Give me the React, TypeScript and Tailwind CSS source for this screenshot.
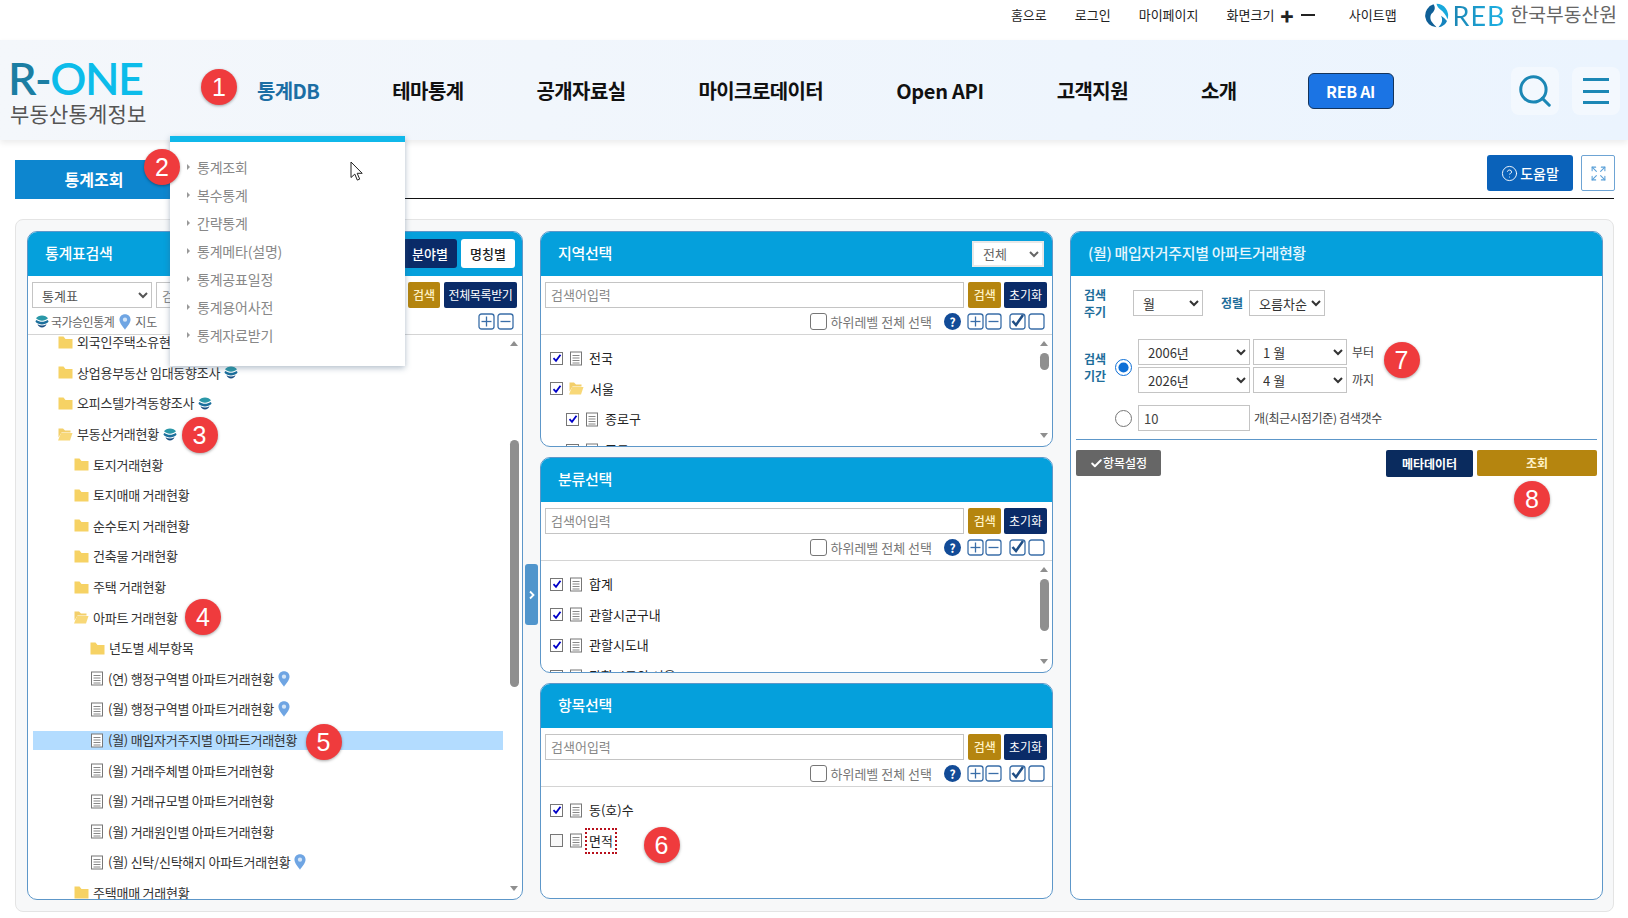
import React from 'react';
import { Search, CircleHelp, Expand, Check } from 'lucide-react';

type TreeRow = { level: number; icon: 'folder' | 'open' | 'doc'; text: string; badge?: 'stack' | 'pin'; active?: boolean };

const treeRows: TreeRow[] = [
  { level: 1, icon: 'folder', text: '외국인주택소유현황', badge: 'stack' },
  { level: 1, icon: 'folder', text: '상업용부동산 임대동향조사', badge: 'stack' },
  { level: 1, icon: 'folder', text: '오피스텔가격동향조사', badge: 'stack' },
  { level: 1, icon: 'open', text: '부동산거래현황', badge: 'stack' },
  { level: 2, icon: 'folder', text: '토지거래현황' },
  { level: 2, icon: 'folder', text: '토지매매 거래현황' },
  { level: 2, icon: 'folder', text: '순수토지 거래현황' },
  { level: 2, icon: 'folder', text: '건축물 거래현황' },
  { level: 2, icon: 'folder', text: '주택 거래현황' },
  { level: 2, icon: 'open', text: '아파트 거래현황' },
  { level: 3, icon: 'folder', text: '년도별 세부항목' },
  { level: 3, icon: 'doc', text: '(연) 행정구역별 아파트거래현황', badge: 'pin' },
  { level: 3, icon: 'doc', text: '(월) 행정구역별 아파트거래현황', badge: 'pin' },
  { level: 3, icon: 'doc', text: '(월) 매입자거주지별 아파트거래현황', active: true },
  { level: 3, icon: 'doc', text: '(월) 거래주체별 아파트거래현황' },
  { level: 3, icon: 'doc', text: '(월) 거래규모별 아파트거래현황' },
  { level: 3, icon: 'doc', text: '(월) 거래원인별 아파트거래현황' },
  { level: 3, icon: 'doc', text: '(월) 신탁/신탁해지 아파트거래현황', badge: 'pin' },
  { level: 2, icon: 'folder', text: '주택매매 거래현황' },
];

const navItems = ['통계DB', '테마통계', '공개자료실', '마이크로데이터', 'Open API', '고객지원', '소개'];
const menuItems = ['통계조회', '복수통계', '간략통계', '통계메타(설명)', '통계공표일정', '통계용어사전', '통계자료받기'];
const topLinks = ['홈으로', '로그인', '마이페이지'];

const markers = [
  { n: 1, x: 219, y: 87 },
  { n: 2, x: 162, y: 167 },
  { n: 3, x: 199.5, y: 435 },
  { n: 4, x: 203, y: 617 },
  { n: 5, x: 323.5, y: 742 },
  { n: 6, x: 661.5, y: 845 },
  { n: 7, x: 1401.5, y: 360 },
  { n: 8, x: 1532, y: 499 },
];

const DocIcon = () => (
  <svg width="14" height="15" viewBox="0 0 14 15" className="shrink-0">
    <rect x="1.5" y="1" width="11" height="13" fill="#fff" stroke="#777" strokeWidth="1" />
    <path d="M3.5 4.5h7M3.5 7h7M3.5 9.5h7M3.5 12h7" stroke="#888" strokeWidth="1" />
  </svg>
);

const FolderIcon = () => (
  <svg width="15" height="13" viewBox="0 0 15 13" className="shrink-0">
    <path d="M0.5 0.5h5l2 2.5h7v9.5h-14z" fill="#f6d264" />
  </svg>
);

const OpenFolderIcon = () => (
  <svg width="15" height="13" viewBox="0 0 15 13" className="shrink-0">
    <path d="M0.5 0.5h4.5l2 2h5.5v2h-9l-3 5z" fill="#f3cf6a" />
    <path d="M3 5h11.5l-2.5 7.500h-12z" fill="#f8d878" />
  </svg>
);

const StackIcon = () => (
  <svg width="14" height="13" viewBox="0 0 14 13" className="shrink-0">
    <path d="M7 0.500c2.500 0 5 1.400 6 2.800-1.500 1.600-4 2.400-6 2.400s-4.500-0.800-6-2.400c1-1.400 3.500-2.800 6-2.800z" fill="#2b98a8" />
    <path d="M1.500 5c1.500 1.200 3.500 1.800 5.500 1.800s4-0.600 5.500-1.800c0.700 0.500 1 1.100 1 1.700-1.500 1.700-4.500 2.700-6.500 2.700s-5-1-6.500-2.700c0-0.600 0.300-1.200 1-1.700z" fill="#1c6f9c" />
    <path d="M2.500 9.200c1.500 0.800 3 1.200 4.500 1.200s3-0.400 4.500-1.200c-0.500 1.900-2.500 3.300-4.500 3.300s-4-1.400-4.500-3.300z" fill="#1b4f82" />
  </svg>
);

const PinIcon = () => (
  <svg width="12" height="16" viewBox="0 0 11 15" className="shrink-0">
    <path d="M5.500 0.300c2.900 0 5.200 2.100 5.200 5 0 3.300-3.500 6.500-5.200 9.400-1.700-2.900-5.200-6.100-5.200-9.400 0-2.900 2.300-5 5.200-5z" fill="#6fa5e3" />
    <circle cx="5.500" cy="5.300" r="2" fill="#d5e6f8" />
  </svg>
);

const TreeCheck = ({ checked = true }: { checked?: boolean }) => (
  <span className={`w-[13px] h-[13px] border border-[#767676] flex items-center justify-center shrink-0 ${checked ? 'bg-white' : 'bg-[#f8f8f8]'}`}>
    {checked && (
      <svg width="10" height="10" viewBox="0 0 10 10">
        <path d="M1.500 5.200l2.500 2.600 4.500-6" fill="none" stroke="#0000c8" strokeWidth="1.800" />
      </svg>
    )}
  </span>
);

const BoxIcon = ({ kind }: { kind: 'plus' | 'minus' | 'check' | 'empty' }) => (
  <svg width="17" height="17" viewBox="0 0 17 17" className="shrink-0">
    <rect x="1" y="1" width="15" height="15" rx="2.500" fill="#fff" stroke="#3a6ea8" strokeWidth="1.300" />
    {(kind === 'plus' || kind === 'minus') && <path d="M3.500 8.500h10" stroke="#3a6ea8" strokeWidth="1.300" />}
    {kind === 'plus' && <path d="M8.500 3.500v10" stroke="#3a6ea8" strokeWidth="1.300" />}
    {kind === 'check' && <path d="M3.500 8l3.500 4 7-10" fill="none" stroke="#1f4e85" strokeWidth="2.500" />}
  </svg>
);

const ScrollBar = ({ thumbTop, thumbHeight }: { thumbTop: number; thumbHeight: number }) => (
  <div className="w-[9px] shrink-0 relative h-full">
    <span className="absolute top-[6px] left-0 w-0 h-0 border-x-[4.500px] border-x-transparent border-b-[5px] border-b-[#8f8f8f]" />
    <span className="absolute left-0 w-[9px] rounded-full bg-[#8f8f8f]" style={{ top: thumbTop, height: thumbHeight }} />
    <span className="absolute bottom-[8px] left-0 w-0 h-0 border-x-[4.500px] border-x-transparent border-t-[5px] border-t-[#8f8f8f]" />
  </div>
);

const SelectBox = ({ className, options }: { className: string; options: string[] }) => (
  <select className={`h-[26px] border border-[#c4c4c4] bg-white text-[13px] text-[#333] pl-[5px] ${className}`}>
    {options.map(o => (
      <option key={o}>{o}</option>
    ))}
  </select>
);

const SelectPanel = ({
  title,
  items,
  thumb,
  region,
}: {
  title: string;
  items: { text: string; icon: 'doc' | 'open'; indent?: boolean; checked?: boolean; focus?: boolean }[];
  thumb?: number[];
  region?: boolean;
}) => (
  <div className="h-[216px] rounded-[10px] border border-[#5d97c9] bg-white overflow-hidden flex flex-col">
    <div className="h-[45px] -mx-px -mt-px bg-[#05a0dc] flex items-center justify-between pl-[18px] pr-[9px] shrink-0">
      <span className="text-[15px] font-medium text-white tracking-[-0.3px]">{title}</span>
      {region && <SelectBox className="w-[72px] text-[#666] border-2 border-[#e8e8e8]" options={['전체']} />}
    </div>
    <div className="h-[59px] border-b border-[#d4d4d4] px-[4px] pt-[6px] shrink-0">
      <div className="flex gap-[3px] pr-[1px]">
        <input
          placeholder="검색어입력"
          className="h-[26px] w-[421px] border border-[#c4c4c4] px-[5px] pb-[2px] text-[13px] outline-none placeholder:text-[#888]"
        />
        <button className="h-[26px] w-[33px] ml-[1px] rounded-[2px] bg-[#b5850f] text-[12px] font-medium text-[#fff3c8]">검색</button>
        <button className="h-[26px] w-[43px] rounded-[2px] bg-[#0a2b68] text-[12px] text-white">초기화</button>
      </div>
      <div className="flex items-center justify-end h-[17px] mt-[5px] pr-[3px]">
        <span className="w-[17px] h-[17px] rounded-[3px] border border-[#767676] bg-white" />
        <span className="ml-[3px] text-[13px] text-[#777] leading-[17px]">하위레벨 전체 선택</span>
        <span className="ml-[12px] w-[17px] h-[17px] rounded-full bg-[#124b97] text-white text-[12px] font-bold leading-[17px] text-center">?</span>
        <span className="ml-[6px]"><BoxIcon kind="plus" /></span>
        <span className="ml-[1px]"><BoxIcon kind="minus" /></span>
        <span className="ml-[7px]"><BoxIcon kind="check" /></span>
        <span className="ml-[2px]"><BoxIcon kind="empty" /></span>
      </div>
    </div>
    <div className="flex-1 flex min-h-0 pr-[3px]">
      <div className="flex-1 overflow-hidden pt-[8px]">
        {items.map(item => (
          <div key={item.text} className={`h-[30.600px] flex items-center gap-[6px] ${item.indent ? 'pl-[25px]' : 'pl-[9px]'}`}>
            <TreeCheck checked={item.checked !== false} />
            {item.icon === 'doc' ? <DocIcon /> : <OpenFolderIcon />}
            <span className={`text-[13px] leading-[18px] text-[#222] ${item.focus ? 'outline-[2.500px] outline-dotted outline-[#b8101c] outline-offset-[2px]' : ''}`}>
              {item.text}
            </span>
          </div>
        ))}
      </div>
      {thumb && <ScrollBar thumbTop={thumb[0]} thumbHeight={thumb[1]} />}
    </div>
  </div>
);

export default function App() {
  return (
    <div className="relative w-full h-[918px] overflow-hidden bg-white text-[#222] font-['Noto_Sans_CJK_KR','Noto_Sans',sans-serif]">
      {/* 상단 링크 */}
      <div className="h-[40px] flex items-center justify-end pr-[11px]">
        <div className="flex items-center text-[13px] text-[#222] gap-[28px] -mt-[10px]">
          {topLinks.map(t => (
            <span key={t}>{t}</span>
          ))}
          <span className="flex items-center">
            화면크기
            <span className="ml-[6px] text-[22px] leading-none font-black">+</span>
            <span className="ml-[7px] w-[14px] h-[2.500px] bg-[#222]" />
          </span>
          <span className="ml-[6px]">사이트맵</span>
        </div>
        <div className="flex items-center ml-[27px] -mt-[10px]">
          <svg width="25" height="25" viewBox="0 0 25 25">
            <path d="M12.500 0.800a11.700 11.700 0 0 1 11 15.500c-1.500-4-4-7.500-7.500-10-1.500-1.200-3-3-3.500-5.500z" fill="#19a9dc" />
            <path d="M9.500 1.300c2.500 3.500 1 6.500-1.500 9-2 2-2.500 6 0.500 9.500 1 1.200 2 2.500 4 4.400a11.700 11.700 0 0 1-3-22.900z" fill="#0f5f96" />
            <path d="M23 18c-1.500 3.500-5 6-8.500 6.200 1.500-2 3-3.500 3.500-6 0.300-2-0.200-4-1-5.500 2.500 1.500 4.500 3.500 6 5.300z" fill="#1583bd" />
          </svg>
          <span className="ml-[4px] font-['Lato',sans-serif] text-[27px] leading-none font-normal tracking-[1px] bg-gradient-to-r from-[#1b86b4] to-[#1db4e8] bg-clip-text text-transparent">REB</span>
          <span className="ml-[5px] text-[19.300px] leading-none text-[#666]">한국부동산원</span>
        </div>
      </div>

      {/* 헤더 */}
      <header className="h-[100px] flex items-center bg-gradient-to-r from-[#f4f7fb] to-[#ebf4fe] shadow-[0_3px_6px_rgba(0,0,0,0.08)] relative">
        <div className="w-[257px] pl-[8px] shrink-0 pt-[2px]">
          <div className="font-['Lato',sans-serif] text-[45px] leading-[42px] font-semibold tracking-[-1.500px] whitespace-nowrap">
            <span className="text-[#1b7ea3]">R-</span>
            <span className="text-[#0cbcea]">ONE</span>
          </div>
          <div className="mt-[1px] pl-[2px] text-[21px] leading-[26px] tracking-[0.2px] text-[#555]">부동산통계정보</div>
        </div>
        <nav className="flex items-center gap-[73px] mt-[2px]">
          {navItems.map((item, i) => (
            <span
              key={item}
              className={`text-[20px] font-bold leading-[28px] ${item === 'Open API' ? 'tracking-[-0.3px]' : 'tracking-[-0.6px]'} ${i === 0 ? 'text-[#1c6ea4]' : 'text-[#111]'}`}
            >
              {item}
            </span>
          ))}
        </nav>
        <button className="ml-[71px] mt-[2px] w-[86px] h-[36px] rounded-[6px] border border-[#14345c] bg-[#1b74e4] text-[16px] font-bold text-white tracking-[-0.3px]">
          REB AI
        </button>
        <div className="ml-auto flex items-center gap-[13px] pr-[8px] mt-[2px]">
          <span className="w-[48px] h-[48px] rounded-[8px] bg-white/40 flex items-center justify-center text-[#1b87b5]">
            <Search size={38} strokeWidth={1.900} />
          </span>
          <span className="w-[48px] h-[48px] rounded-[8px] bg-white/40 flex flex-col items-center justify-center gap-[8.500px]">
            <span className="w-[26px] h-[3px] bg-[#1b87b5]" />
            <span className="w-[26px] h-[3px] bg-[#1b87b5]" />
            <span className="w-[26px] h-[3px] bg-[#1b87b5]" />
          </span>
        </div>
      </header>

      {/* 탭 줄 */}
      <div className="h-[59px] flex items-start pl-[15px] pr-[14px] pt-[15px] relative">
        <div className="flex-1 flex items-end h-[44px] border-b border-[#111]">
          <div className="w-[170px] h-[39px] -mb-px bg-[#0d86cf] text-white text-[16px] font-bold flex items-center justify-center pr-[12px] pb-[1px]">통계조회</div>
        </div>
        <div className="absolute right-[13px] top-[15px] flex gap-[8px]">
          <button className="w-[86px] h-[36px] rounded-[3px] bg-[#0a62ba] text-white text-[14px] font-medium flex items-center justify-center gap-[2px]">
            <CircleHelp size={17} strokeWidth={1.300} />
            도움말
          </button>
          <button className="w-[34px] h-[36px] rounded-[2px] border border-[#6ea4d4] bg-white flex items-center justify-center text-[#5aa0d8]">
            <Expand size={17} strokeWidth={1.500} />
          </button>
        </div>
      </div>

      {/* 본문 */}
      <div className="mx-[15px] mr-[14px] mt-[20px] h-[693px] rounded-[8px] border border-[#e4e4e4] bg-[#f7f8f9] px-[11px] pt-[11px] flex">
        {/* 통계표검색 */}
        <div className="w-[496px] h-[669px] shrink-0 rounded-[10px] border border-[#5d97c9] bg-white overflow-hidden flex flex-col">
          <div className="h-[45px] -mx-px -mt-px bg-[#05a0dc] flex items-center justify-between pl-[18px] pr-[8px] shrink-0">
            <span className="text-[15px] font-medium text-white tracking-[-0.3px]">통계표검색</span>
            <div className="flex gap-[4px]">
              <button className="w-[54px] h-[29px] rounded-[3px] bg-[#0a2b68] text-white text-[13px] font-medium">분야별</button>
              <button className="w-[54px] h-[29px] rounded-[3px] bg-white text-[#222] text-[13px] font-medium">명칭별</button>
            </div>
          </div>
          <div className="h-[59px] border-b border-[#d4d4d4] px-[4px] pt-[6px] shrink-0">
            <div className="flex gap-[4px]">
              <SelectBox className="w-[120px] text-[#555]" options={['통계표']} />
              <input placeholder="검색어입력" className="h-[26px] w-[248px] border border-[#c4c4c4] px-[5px] text-[13px] placeholder:text-[#888]" />
              <button className="h-[26px] w-[32px] rounded-[2px] bg-[#b5850f] text-[12px] font-medium text-[#fff3c8]">검색</button>
              <button className="h-[26px] w-[73px] rounded-[2px] bg-[#0a2b68] text-[12px] text-white tracking-[-0.4px]">전체목록받기</button>
            </div>
            <div className="flex items-center h-[17px] mt-[5px] pl-[3px] pr-[4px]">
              <StackIcon />
              <span className="ml-[2px] text-[12px] tracking-[-0.5px] text-[#666]">국가승인통계</span>
              <span className="ml-[5px]"><PinIcon /></span>
              <span className="ml-[4px] text-[12px] text-[#666]">지도</span>
              <span className="ml-auto"><BoxIcon kind="plus" /></span>
              <span className="ml-[2px]"><BoxIcon kind="minus" /></span>
            </div>
          </div>
          <div className="flex-1 flex min-h-0 pr-[3px] pl-[5px]">
            <div className="flex-1 overflow-hidden pr-[7px]">
              <div className="-mt-[8px]">
                {treeRows.map(row => (
                  <div key={row.text} className="h-[30.600px] flex items-center">
                    <div
                      className={`w-full flex items-center gap-[4px] h-[19px] ${row.active ? 'bg-[#b3dcff]' : ''} ${
                        row.level === 1 ? 'pl-[25px]' : row.level === 2 ? 'pl-[41px]' : 'pl-[57px]'
                      }`}
                    >
                      {row.icon === 'doc' ? <DocIcon /> : row.icon === 'open' ? <OpenFolderIcon /> : <FolderIcon />}
                      <span className="text-[13px] leading-[18px] tracking-[-0.25px] text-[#333]">{row.text}</span>
                      {row.badge === 'stack' && <StackIcon />}
                      {row.badge === 'pin' && <PinIcon />}
                    </div>
                  </div>
                ))}
              </div>
            </div>
            <ScrollBar thumbTop={105} thumbHeight={247} />
          </div>
        </div>

        {/* 접기 버튼 */}
        <div className="w-[17px] shrink-0 flex justify-center">
          <button className="mt-[333px] w-[13px] h-[61px] rounded-[3px] bg-[#5095cc] text-white text-[12px] font-bold flex items-center justify-center">
            <svg width="8" height="10" viewBox="0 0 8 10">
              <path d="M2 1.500l3.500 3.500-3.500 3.500" fill="none" stroke="#fff" strokeWidth="1.800" />
            </svg>
          </button>
        </div>

        {/* 선택 패널 */}
        <div className="w-[513px] shrink-0 flex flex-col gap-[10px]">
          <SelectPanel
            title="지역선택"
            region
            thumb={[18, 17]}
            items={[
              { text: '전국', icon: 'doc' },
              { text: '서울', icon: 'open' },
              { text: '종로구', icon: 'doc', indent: true },
              { text: '중구', icon: 'doc', indent: true },
            ]}
          />
          <SelectPanel
            title="분류선택"
            thumb={[18, 52]}
            items={[
              { text: '합계', icon: 'doc' },
              { text: '관할시군구내', icon: 'doc' },
              { text: '관할시도내', icon: 'doc' },
              { text: '관할시도외 서울', icon: 'doc' },
            ]}
          />
          <SelectPanel
            title="항목선택"
            items={[
              { text: '동(호)수', icon: 'doc' },
              { text: '면적', icon: 'doc', checked: false, focus: true },
            ]}
          />
        </div>

        {/* 조회 조건 */}
        <div className="ml-[17px] w-[533px] h-[669px] shrink-0 rounded-[10px] border border-[#5d97c9] bg-white overflow-hidden flex flex-col">
          <div className="h-[45px] -mx-px -mt-px bg-[#05a0dc] flex items-center pl-[18px] shrink-0">
            <span className="text-[15px] font-medium text-[#e8f6fc] tracking-[-0.35px]">(월) 매입자거주지별 아파트거래현황</span>
          </div>
          <div className="px-[5px] pt-[10px]">
            <div className="flex items-center h-[34px] pl-[8px]">
              <span className="w-[49px] text-[12px] font-bold leading-[17px] text-[#1e6d9a]">검색<br />주기</span>
              <SelectBox className="w-[70px]" options={['월']} />
              <span className="ml-[18px] mr-[6px] text-[12px] font-bold text-[#1e6d9a]">정렬</span>
              <SelectBox className="w-[76px]" options={['오름차순']} />
            </div>
            <div className="flex mt-[19px] pl-[8px]">
              <span className="w-[31px] mt-[11px] text-[12px] font-bold leading-[17px] text-[#1e6d9a]">검색<br />기간</span>
              <input type="radio" name="term" defaultChecked className="mt-[20px] w-[17px] h-[17px] accent-[#0d6fd6]" />
              <div className="ml-[6px] flex flex-col gap-[2px]">
                <div className="flex items-center gap-[3px]">
                  <SelectBox className="w-[112px]" options={['2006년']} />
                  <SelectBox className="w-[94px]" options={['1 월']} />
                  <span className="ml-[2px] text-[12px] text-[#444]">부터</span>
                </div>
                <div className="flex items-center gap-[3px]">
                  <SelectBox className="w-[112px]" options={['2026년']} />
                  <SelectBox className="w-[94px]" options={['4 월']} />
                  <span className="ml-[2px] text-[12px] text-[#444]">까지</span>
                </div>
              </div>
            </div>
            <div className="flex items-center mt-[12px] pl-[39px]">
              <input type="radio" name="term" className="w-[17px] h-[17px]" />
              <input defaultValue="10" className="ml-[6px] w-[112px] h-[26px] border border-[#c4c4c4] px-[5px] text-[13px] text-[#444]" />
              <span className="ml-[4px] text-[12px] tracking-[-0.3px] text-[#444]">개(최근시점기준) 검색갯수</span>
            </div>
            <div className="mt-[8px] border-t border-[#5d97c9] pt-[10px] flex items-start">
              <button className="w-[85px] h-[26px] rounded-[2px] bg-[#666] text-white text-[12px] font-medium flex items-center justify-center">
                <Check size={13} strokeWidth={3.500} />항목설정
              </button>
              <button className="ml-auto w-[87px] h-[27px] rounded-[2px] bg-[#0a2b5e] text-white text-[12px] font-bold">메타데이터</button>
              <button className="ml-[4px] w-[120px] h-[26px] rounded-[2px] bg-[#b5850f] text-[#fff3c8] text-[12px] font-bold">조회</button>
            </div>
          </div>
        </div>
      </div>

      {/* 통계DB 드롭다운 */}
      <div className="absolute left-[170px] top-[136px] w-[235px] h-[230px] bg-white border-t-[6px] border-[#10b8ea] shadow-[0_2px_6px_rgba(60,90,120,0.4)] pt-[11px]">
        {menuItems.map(item => (
          <div key={item} className="h-[28px] flex items-center pl-[17px] text-[14px] text-[#888] tracking-[-0.2px]">
            <span className="w-0 h-0 border-y-[3px] border-y-transparent border-l-[3px] border-l-[#999] mr-[7px]" />
            {item}
          </div>
        ))}
      </div>

      {/* 마우스 커서 */}
      <svg className="absolute left-[350px] top-[161px]" width="14" height="21" viewBox="0 0 14 21">
        <path d="M1 1v15.500l3.800-3.400 2.500 6 2.400-1-2.500-5.800h5z" fill="#fff" stroke="#222" strokeWidth="1" />
      </svg>

      {/* 번호 표시 */}
      {markers.map(m => (
        <span
          key={m.n}
          className="absolute w-[36px] h-[36px] -ml-[18px] -mt-[18px] rounded-full bg-[#ef3b3d] text-white text-[25px] leading-[36px] text-center font-['Liberation_Sans',sans-serif] shadow-[0_1px_3px_rgba(0,0,0,0.35)]"
          style={{ left: m.x, top: m.y }}
        >
          {m.n}
        </span>
      ))}
    </div>
  );
}
